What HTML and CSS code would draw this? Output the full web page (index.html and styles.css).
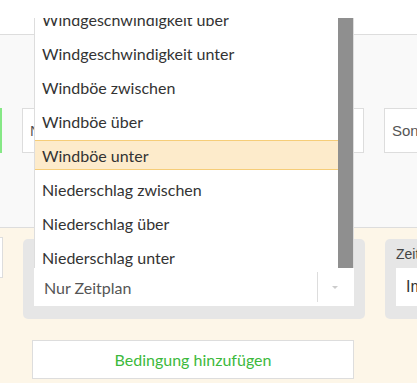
FILE: index.html
```html
<!DOCTYPE html>
<html lang="de">
<head>
    <meta charset="UTF-8">
    <meta name="viewport" content="width=device-width, initial-scale=1.0">
    <title>Bedingungen</title>
    <link rel="stylesheet" href="styles.css">
</head>
<body>
    <div class="top"></div>

    <div class="panel">
        <div class="panel-row">
            <div class="btn-green"></div>
            <div class="field field-wide">N</div>
            <div class="field field-narrow">Sonnenaufgang</div>
        </div>
    </div>

    <div class="conditions">
        <div class="cond-row">
            <div class="field field-stub"></div>

            <div class="group group-main">
                <div class="select">
                    <div class="menu">
                        <div class="menu-list">
                            <div class="menu-item">Windgeschwindigkeit über</div>
                            <div class="menu-item">Windgeschwindigkeit unter</div>
                            <div class="menu-item">Windböe zwischen</div>
                            <div class="menu-item">Windböe über</div>
                            <div class="menu-item active">Windböe unter</div>
                            <div class="menu-item">Niederschlag zwischen</div>
                            <div class="menu-item">Niederschlag über</div>
                            <div class="menu-item">Niederschlag unter</div>
                        </div>
                        <div class="menu-scroll"></div>
                    </div>
                    <span class="select-value">Nur Zeitplan</span>
                    <span class="select-sep"></span>
                    <span class="select-caret"></span>
                </div>
            </div>

            <div class="group group-side">
                <div class="group-label">Zeitraum</div>
                <div class="field field-side">Immer</div>
            </div>
        </div>

        <button class="add-btn">Bedingung hinzufügen</button>
    </div>
</body>
</html>
```

FILE: styles.css
```css
body {
    margin: 0;
    width: 417px;
    height: 383px;
    overflow: hidden;
    background: #fdf6e8;
    font-family: 'Liberation Sans', Arial, sans-serif;
}
.top {
    height: 34px;
    background: #fff;
}
.panel {
    height: 194px;
    background: #f9f9f9;
    border-top: 1px solid #ddd;
    border-bottom: 1px solid #ddd;
    padding-top: 73px;
    box-sizing: border-box;
}
.panel-row {
    display: flex;
    gap: 20px;
}
.btn-green {
    width: 40px;
    height: 45px;
    margin-left: -38px;
    background: #fff;
    border: 2px solid #86e886;
    box-sizing: border-box;
    flex: none;
}
.field {
    background: #fff;
    border: 1px solid #ddd;
    box-sizing: border-box;
    color: #555;
    font-size: 15px;
    padding-left: 7px;
    display: flex;
    align-items: center;
    flex: none;
    white-space: nowrap;
    overflow: hidden;
}
.field-wide {
    width: 342px;
    height: 45px;
}
.field-narrow {
    width: 120px;
    height: 45px;
}
.conditions {
    padding-top: 11px;
}
.cond-row {
    display: flex;
    gap: 20px;
    align-items: flex-start;
}
.field-stub {
    width: 40px;
    height: 41px;
    margin-left: -37px;
    margin-top: -2px;
}
.group {
    background: #e6e6e6;
    border-radius: 5px;
    box-sizing: border-box;
    flex: none;
}
.group-main {
    width: 342px;
    height: 80px;
    padding: 29px 11px 13px;
}
.group-side {
    width: 120px;
    height: 80px;
    padding: 7px 11px 13px;
}
.group-label {
    font-size: 14px;
    color: #444;
    height: 22px;
}
.field-side {
    height: 38px;
    border: none;
    font-size: 16px;
    color: #333;
    padding-left: 10px;
}
.select {
    position: relative;
    height: 38px;
    background: #fff;
    display: flex;
    align-items: center;
    padding-left: 10px;
    font-family: 'Lato', sans-serif;
    font-size: 16px;
    color: #555;
}
.select-value {
    flex: 1;
}
.select-sep {
    width: 1px;
    height: 30px;
    background: #ddd;
    margin-right: 14px;
}
.select-caret {
    width: 0;
    height: 0;
    border-left: 3px solid transparent;
    border-right: 3px solid transparent;
    border-top: 3px solid #ccc;
    margin-right: 16px;
}

/* open dropdown, grows upward from the select */
.menu {
    position: absolute;
    left: 0;
    bottom: 100%;
    width: 320px;
    height: 250px;
    background: #fff;
    border-left: 1px solid #ddd;
    border-right: 1px solid #ddd;
    box-sizing: border-box;
    display: flex;
    overflow: hidden;
}
.menu-list {
    flex: 1;
    display: flex;
    flex-direction: column;
    gap: 4px;
    margin-top: -14px;
}
.menu-item {
    height: 30px;
    flex: none;
    box-sizing: border-box;
    border-top: 1px solid transparent;
    border-bottom: 1px solid transparent;
    padding-left: 7px;
    display: flex;
    align-items: center;
    color: #333;
    white-space: nowrap;
}
.menu-item.active {
    background: #fdebcb;
    border-color: #f6cd78;
}
.menu-scroll {
    width: 15px;
    background: #8f8f8f;
    flex: none;
}
.add-btn {
    display: block;
    width: 322px;
    height: 39px;
    margin: 21px 0 0 32px;
    background: #fff;
    border: 1px solid #ddd;
    font-family: 'Lato', sans-serif;
    font-size: 16px;
    color: #3cb93c;
    padding: 0;
}
```
